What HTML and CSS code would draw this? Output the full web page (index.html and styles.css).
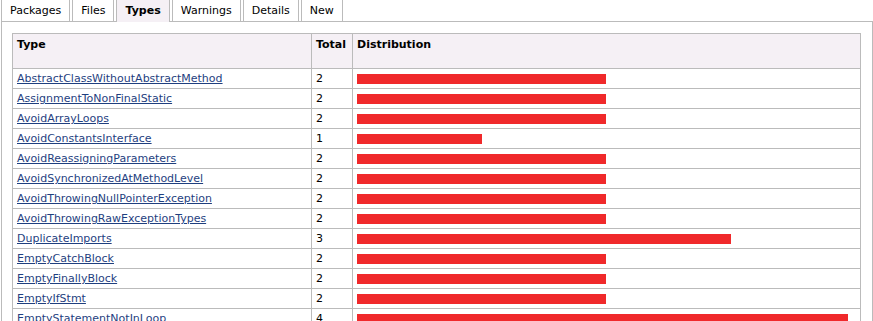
FILE: index.html
```html
<!DOCTYPE html>
<html lang="en">
<head>
  <meta charset="UTF-8">
  <title>Types</title>
  <link rel="stylesheet" href="styles.css">
</head>
<body>

<div id="report">
  <ul class="tabs">
    <li class="tab">Packages</li>
    <li class="tab">Files</li>
    <li class="tab active">Types</li>
    <li class="tab">Warnings</li>
    <li class="tab">Details</li>
    <li class="tab">New</li>
  </ul>

  <div class="panel">
    <table class="types">
      <colgroup>
        <col class="col-type">
        <col class="col-total">
        <col class="col-dist">
      </colgroup>
      <thead>
        <tr>
          <th>Type</th>
          <th>Total</th>
          <th>Distribution</th>
        </tr>
      </thead>
      <tbody>
        <tr><td><a href="#">AbstractClassWithoutAbstractMethod</a></td><td>2</td><td><div class="bar" style="width: 249px"></div></td></tr>
        <tr><td><a href="#">AssignmentToNonFinalStatic</a></td><td>2</td><td><div class="bar" style="width: 249px"></div></td></tr>
        <tr><td><a href="#">AvoidArrayLoops</a></td><td>2</td><td><div class="bar" style="width: 249px"></div></td></tr>
        <tr><td><a href="#">AvoidConstantsInterface</a></td><td>1</td><td><div class="bar" style="width: 125px"></div></td></tr>
        <tr><td><a href="#">AvoidReassigningParameters</a></td><td>2</td><td><div class="bar" style="width: 249px"></div></td></tr>
        <tr><td><a href="#">AvoidSynchronizedAtMethodLevel</a></td><td>2</td><td><div class="bar" style="width: 249px"></div></td></tr>
        <tr><td><a href="#">AvoidThrowingNullPointerException</a></td><td>2</td><td><div class="bar" style="width: 249px"></div></td></tr>
        <tr><td><a href="#">AvoidThrowingRawExceptionTypes</a></td><td>2</td><td><div class="bar" style="width: 249px"></div></td></tr>
        <tr><td><a href="#">DuplicateImports</a></td><td>3</td><td><div class="bar" style="width: 374px"></div></td></tr>
        <tr><td><a href="#">EmptyCatchBlock</a></td><td>2</td><td><div class="bar" style="width: 249px"></div></td></tr>
        <tr><td><a href="#">EmptyFinallyBlock</a></td><td>2</td><td><div class="bar" style="width: 249px"></div></td></tr>
        <tr><td><a href="#">EmptyIfStmt</a></td><td>2</td><td><div class="bar" style="width: 249px"></div></td></tr>
        <tr><td><a href="#">EmptyStatementNotInLoop</a></td><td>4</td><td><div class="bar" style="width: 491px"></div></td></tr>
      </tbody>
    </table>
  </div>
</div>

</body>
</html>
```

FILE: styles.css
```css
body {
  margin: 0;
  font-family: "DejaVu Sans", Verdana, sans-serif;
  font-size: 11px;
  color: #000;
  background-color: #fff;
}

#report {
  margin-left: 1px;
  width: 872px;
}

.tabs {
  list-style: none;
  margin: 0;
  padding: 0;
  display: flex;
  align-items: flex-start;
}

.tab {
  height: 21px;
  line-height: 21px;
  padding: 0 8px;
  margin-right: 2px;
  border-left: 1px solid #bbb;
  border-right: 1px solid #bbb;
  background-color: #fff;
  cursor: pointer;
}

.tab.active {
  position: relative;
  height: 22px;
  margin-bottom: -1px;
  font-weight: bold;
  background-color: #f5f0f5;
}

.panel {
  border: 1px solid #bbb;
  padding: 11px 11px 20px 10px;
}

.types {
  width: 849px;
  border-collapse: collapse;
  table-layout: fixed;
}

.col-type {
  width: 299px;
}

.col-total {
  width: 41px;
}

.types th,
.types td {
  border: 1px solid #bbb;
  padding: 0 4px;
  text-align: left;
}

.types th {
  height: 30px;
  padding-top: 4px;
  vertical-align: top;
  background-color: #f5f0f5;
  font-weight: bold;
}

.types td {
  height: 19px;
  vertical-align: middle;
}

.types a {
  color: #1f3f7f;
}

.bar {
  height: 10px;
  background-color: #f0292b;
}
```
